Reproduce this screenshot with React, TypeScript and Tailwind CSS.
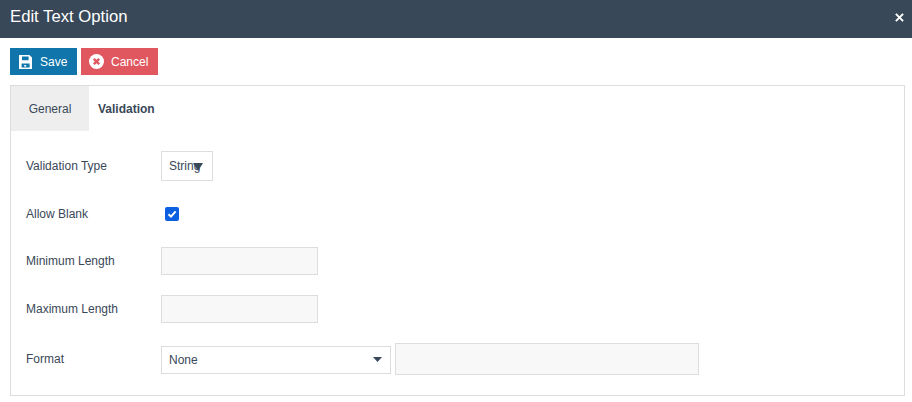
import React from "react";

function Caret({ className, width, height }: { className: string; width: number; height: number }) {
  return (
    <svg viewBox="0 0 10 6" width={width} height={height} preserveAspectRatio="none" className={className}>
      <path d="M0 0 H10 L5 6 Z" fill="#394858" />
    </svg>
  );
}

function Row({ label, className, labelClass, children }: { label: string; className: string; labelClass?: string; children: React.ReactNode }) {
  return (
    <div className={`flex items-center ${className}`}>
      <div className={`w-[135px] shrink-0 ${labelClass ?? ""}`}>{label}</div>
      {children}
    </div>
  );
}

function TextBox({ className }: { className: string }) {
  return <div className={`border border-[#dddddd] bg-[#f8f8f8] ${className}`} />;
}

export default function App() {
  return (
    <div className="w-[912px] h-[402px] overflow-hidden bg-white text-[12px] text-[#394858] font-['Liberation_Sans',Arial,sans-serif]">
      <header className="h-[38px] bg-[#394858] flex items-center justify-between pl-[10px] pr-[8px] text-white">
        <span className="text-[16.7px] leading-[20px] -mt-[4px]">Edit Text Option</span>
        <svg viewBox="0 0 10 10" width="9" height="9" className="-mt-[4px]">
          <path d="M1 1 L9 9 M9 1 L1 9" stroke="#ffffff" strokeWidth="2.2" />
        </svg>
      </header>

      <div className="flex gap-[4px] pl-[10px] pt-[10px]">
        <button className="h-[27px] w-[67px] bg-[#0f75aa] text-white flex items-center pl-[9px]">
          <svg viewBox="0 0 13 14" width="13" height="14" className="mr-[8px]">
            <path fillRule="evenodd" fill="#ffffff" d="M0 0 H10.4 L13 2.6 V14 H0 Z M3 1.6 V5.2 H9.6 V1.6 Z M2.6 8.4 V12.4 H10.6 V8.4 Z" />
            <rect x="5.2" y="10" width="2" height="1.6" fill="#ffffff" />
          </svg>
          Save
        </button>
        <button className="h-[27px] w-[77px] bg-[#e05760] text-white flex items-center pl-[8px]">
          <svg viewBox="0 0 14 14" width="15" height="15" className="mr-[7px]">
            <circle cx="7" cy="7" r="7" fill="#ffffff" />
            <path d="M4.5 4.5 L9.5 9.5 M9.5 4.5 L4.5 9.5" stroke="#e05760" strokeWidth="2.2" />
          </svg>
          Cancel
        </button>
      </div>

      <section className="ml-[10px] mt-[10px] w-[895px] h-[311px] border border-[#dddddd]">
        <div className="flex h-[45px]">
          <div className="w-[78px] bg-[#eeeeee] flex items-center justify-center">General</div>
          <div className="pl-[9px] flex items-center font-bold">Validation</div>
        </div>

        <div className="pl-[15px]">
          <Row label="Validation Type" className="mt-[20px] h-[30px]">
            <div className="relative w-[52px] h-[30px] border border-[#dddddd] pl-[7px] leading-[28px]">
              String
              <Caret className="absolute left-[31px] top-[11px]" width={10} height={8} />
            </div>
          </Row>

          <Row label="Allow Blank" className="mt-[26px] h-[14px]">
            <div className="ml-[4px] w-[14px] h-[14px] rounded-[2px] bg-[#0a60e0] flex items-center justify-center">
              <svg viewBox="0 0 12 12" width="12" height="12">
                <path d="M2.5 6.2 L5 8.6 L9.6 3.4" fill="none" stroke="#ffffff" strokeWidth="2" />
              </svg>
            </div>
          </Row>

          <Row label="Minimum Length" className="mt-[26px] h-[28px]">
            <TextBox className="w-[157px] h-[28px]" />
          </Row>

          <Row label="Maximum Length" className="mt-[20px] h-[28px]">
            <TextBox className="w-[157px] h-[28px]" />
          </Row>

          <Row label="Format" className="mt-[20px] h-[32px]">
            <div className="relative w-[230px] h-[28px] mt-[2px] border border-[#dddddd] pl-[7px] leading-[27px]">
              None
              <Caret className="absolute right-[8px] top-[10px]" width={9} height={5} />
            </div>
            <TextBox className="ml-[4px] w-[304px] h-[32px]" />
          </Row>
        </div>
      </section>
    </div>
  );
}
